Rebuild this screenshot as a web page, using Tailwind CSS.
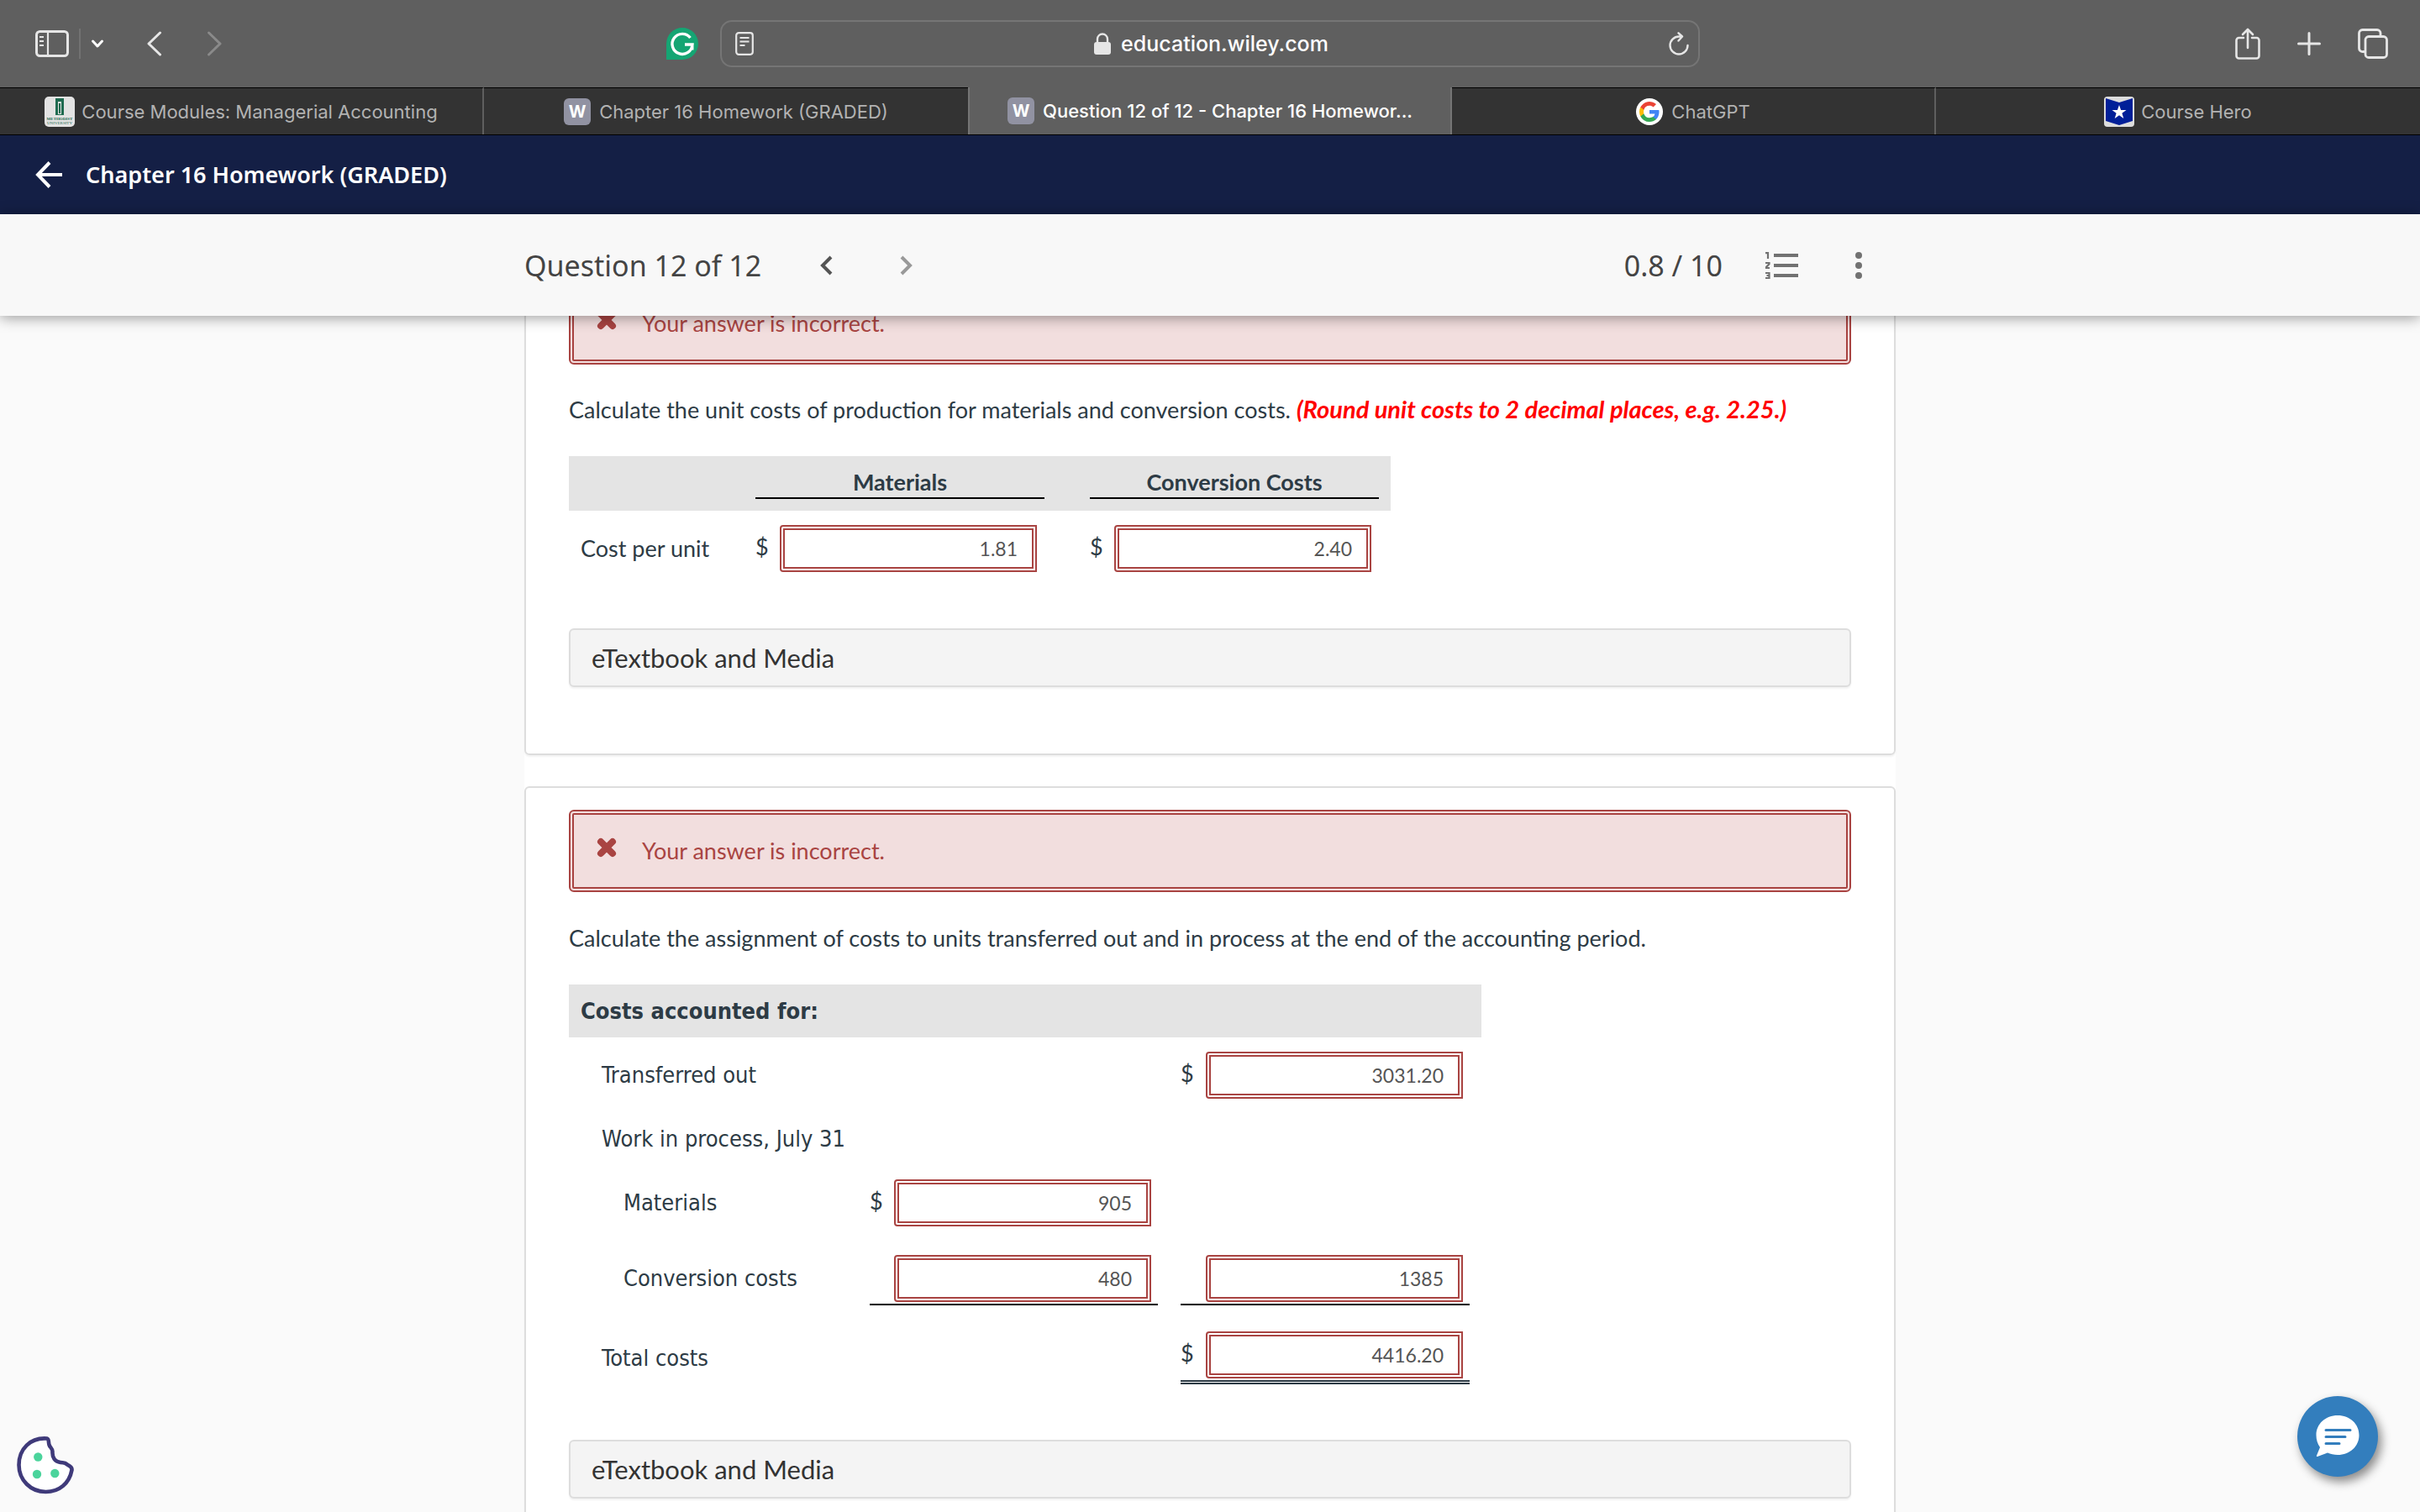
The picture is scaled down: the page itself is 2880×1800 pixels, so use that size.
<!DOCTYPE html>
<html lang="en">
<head>
<meta charset="utf-8">
<title>Question 12 of 12 - Chapter 16 Homework (GRADED)</title>
<script src="https://cdn.jsdelivr.net/npm/@tailwindcss/browser@4"></script>
</head>
<body class="bg-[#fafafa]">
<div class="flex h-screen flex-col overflow-hidden font-['Lato',sans-serif] text-[27px] leading-10 text-[#2d3b45]">

  <!-- Browser toolbar -->
  <div class="grid h-[104px] shrink-0 grid-cols-[1fr_1166px_1fr] items-center bg-[#5f5f5f] font-['Inter',sans-serif] text-[#e6e6e6]">
    <div class="flex items-center pl-[42px] pr-[26px]">
      <button aria-label="Sidebar"><svg class="block h-8 w-10" viewBox="0 0 40 32" fill="none" stroke="currentColor" stroke-width="3"><rect x="1.5" y="1.5" width="37" height="29" rx="4"/><path d="M15 2v28M5 8h5M5 13h5M5 18h5" stroke-width="2.2"/></svg></button>
      <span class="ml-3 h-9 w-0.5 bg-[#727272]"></span>
      <button aria-label="Tab groups" class="ml-3"><svg class="block h-3 w-4" viewBox="0 0 16 12" fill="none" stroke="#fff" stroke-width="3" stroke-linecap="round" stroke-linejoin="round"><path d="M2.500 3l5.500 6 5.500-6"/></svg></button>
      <button aria-label="Back" class="ml-[50px]"><svg class="block h-[30px] w-5" viewBox="0 0 20 30" fill="none" stroke="currentColor" stroke-width="3" stroke-linecap="round" stroke-linejoin="round"><path d="M16.500 2L3 15l13.500 13"/></svg></button>
      <button aria-label="Forward" class="ml-[51px] text-[#8a8a8a]"><svg class="block h-[30px] w-5" viewBox="0 0 20 30" fill="none" stroke="currentColor" stroke-width="3" stroke-linecap="round" stroke-linejoin="round"><path d="M3.500 2L17 15 3.500 28"/></svg></button>
      <button aria-label="Grammarly" class="ml-auto"><svg class="block size-[38px]" viewBox="0 0 38 38"><path d="M19 0a19 19 0 1 1 0 38H0V19A19 19 0 0 1 19 0z" fill="#15a573"/><path d="M28.500 12A12 12 0 1 0 31 20H22M30.800 20.500v6" fill="none" stroke="#fff" stroke-width="3.400"/></svg></button>
    </div>
    <div class="flex h-14 items-center justify-between rounded-[14px] border-2 border-[#757575] pl-4 pr-[11px]">
      <button aria-label="Reader"><svg class="block h-7 w-[22px]" viewBox="0 0 22 28" fill="none" stroke="currentColor" stroke-width="2.200"><rect x="1.200" y="1.200" width="19.600" height="25.600" rx="3"/><path d="M5.500 7h11M5.500 11.500h11M5.500 16h6"/></svg></button>
      <div class="flex items-center gap-3 text-[25px] font-medium text-white">
        <svg class="h-[26px] w-5" viewBox="0 0 20 26" fill="#e6e6e6"><rect x="0" y="11" width="20" height="15" rx="3"/><path d="M4 12V7.500a6 6 0 0 1 12 0V12" fill="none" stroke="#e6e6e6" stroke-width="2.400"/></svg>
        <span>education.wiley.com</span>
      </div>
      <button aria-label="Reload"><svg class="block h-7 w-6" viewBox="0 0 24 28" fill="none" stroke="currentColor" stroke-width="2.400" stroke-linecap="round" stroke-linejoin="round"><path d="M22.500 16A10.500 10.500 0 1 1 12 5.500h4M11.500 1.300L16 5.500l-4.500 5"/></svg></button>
    </div>
    <div class="flex items-center justify-end gap-11 pr-[38px]">
      <button aria-label="Share"><svg class="block h-[38px] w-[30px]" viewBox="0 0 30 38" fill="none" stroke="currentColor" stroke-width="2.600" stroke-linecap="round" stroke-linejoin="round"><path d="M10 12H4.500A3 3 0 0 0 1.500 15v18.500a3 3 0 0 0 3 3h21a3 3 0 0 0 3-3V15a3 3 0 0 0-3-3H20M15 24V2.500M9 8l6-6 6 6"/></svg></button>
      <button aria-label="New tab"><svg class="block size-7" viewBox="0 0 28 28" fill="none" stroke="currentColor" stroke-width="3" stroke-linecap="round"><path d="M14 1.500v25M1.500 14h25"/></svg></button>
      <button aria-label="Tab overview"><svg class="block size-9" viewBox="0 0 36 36" fill="none" stroke="currentColor" stroke-width="2.800"><rect x="9" y="9.500" width="25.500" height="25" rx="4"/><path d="M9 27.500H6A4 4 0 0 1 1.500 23.500V5.500A4 4 0 0 1 5.500 1.500h17.500A4 4 0 0 1 27 5.500v4"/></svg></button>
    </div>
  </div>

  <!-- Tab strip -->
  <nav class="grid h-[57px] shrink-0 grid-cols-5 border-b border-black bg-[#333] font-['Inter',sans-serif] text-[22px] text-[#b2b2b2]">
    <a href="#" class="flex items-center justify-center gap-2 border-r-2 border-t border-r-[#5f5f5f] border-t-black">
      <svg class="size-9" viewBox="0 0 36 36"><rect width="36" height="36" rx="5" fill="#e3e3e3"/><path d="M13 2h10v20H13z" fill="#1f6b50"/><path d="M16 6h4v15h-4z" fill="#e3e3e3"/><path d="M17 8h2v12h-2z" fill="#1f6b50"/><text x="18" y="28" text-anchor="middle" font-family="Liberation Serif" font-weight="700" font-size="5" fill="#1f6b50">METHODIST</text><text x="18" y="33" text-anchor="middle" font-family="Liberation Serif" font-size="5" fill="#1f6b50">UNIVERSITY</text></svg>
      <span>Course Modules: Managerial Accounting</span></a>
    <a href="#" class="flex items-center justify-center gap-2.5 border-t border-black">
      <span class="grid size-8 place-items-center rounded-md bg-[#9192a2] text-xl font-bold text-white">W</span>
      <span>Chapter 16 Homework (GRADED)</span></a>
    <a href="#" class="flex items-center justify-center gap-2.5 border-x-2 border-[#757575] bg-[#5f5f5f] font-medium text-white">
      <span class="grid size-8 place-items-center rounded-md bg-[#9192a2] text-xl font-bold">W</span>
      <span>Question 12 of 12 - Chapter 16 Homewor...</span></a>
    <a href="#" class="flex items-center justify-center gap-2.5 border-r-2 border-t border-r-[#5f5f5f] border-t-black">
      <svg class="size-8" viewBox="0 0 32 32"><circle cx="16" cy="16" r="16" fill="#fff"/><g transform="translate(4 4)"><path fill="#4285F4" d="M23.500 12.300c0-.8-.1-1.600-.2-2.300H12v4.500h6.500a5.500 5.500 0 0 1-2.400 3.600v3h3.900c2.200-2.100 3.500-5.200 3.500-8.800z"/><path fill="#34A853" d="M12 24c3.200 0 6-1.100 8-2.900l-3.900-3c-1.100.7-2.500 1.200-4.100 1.200a7.200 7.200 0 0 1-6.700-5H1.300v3.100A12 12 0 0 0 12 24z"/><path fill="#FBBC05" d="M5.300 14.300a7.200 7.200 0 0 1 0-4.600V6.600H1.300a12 12 0 0 0 0 10.800z"/><path fill="#EA4335" d="M12 4.800c1.800 0 3.300.6 4.600 1.800L20 3.100A12 12 0 0 0 1.300 6.600l4 3.100A7.200 7.200 0 0 1 12 4.800z"/></g></svg>
      <span>ChatGPT</span></a>
    <a href="#" class="flex items-center justify-center gap-2 border-t border-black">
      <svg class="size-9" viewBox="0 0 36 36"><rect width="36" height="36" rx="4" fill="#ddd"/><path d="M2 2l16 5 16-5v27l-16 5-16-5z" fill="#001f98"/><path d="M18 10l2.100 6h6.400l-5.100 3.800 1.900 6.200-5.300-3.700-5.300 3.700 1.900-6.200L9.500 16h6.400z" fill="#fff"/></svg>
      <span>Course Hero</span></a>
  </nav>

  <!-- Assignment bar -->
  <div class="flex h-[94px] shrink-0 items-center gap-7 bg-[#141f45] pl-[42px] font-['Noto_Sans',sans-serif] text-[27px] font-semibold text-white">
    <a href="#" aria-label="Back to course"><svg class="size-8" viewBox="0 0 32 32" fill="none" stroke="#fff" stroke-width="4"><path d="M17 1.500L3 16l14 14.500M3 16h29"/></svg></a>
    <h1>Chapter 16 Homework (GRADED)</h1>
  </div>

  <!-- Question bar -->
  <header class="relative z-10 flex h-[121px] shrink-0 bg-[#f8f8f8] shadow-[0_2px_16px_rgba(0,0,0,0.4)]">
    <div class="mx-auto flex w-full max-w-[1632px] items-center font-['Noto_Sans',sans-serif] text-[34px] text-[#444]">
      <h2>Question 12 of 12</h2>
      <button aria-label="Previous question" class="ml-[67px] text-[#555]"><svg class="block h-6 w-5" viewBox="0 0 20 24" fill="none" stroke="currentColor" stroke-width="4"><path d="M16 2L6 12l10 10"/></svg></button>
      <button aria-label="Next question" disabled class="ml-[76px] text-[#999]"><svg class="block h-6 w-5" viewBox="0 0 20 24" fill="none" stroke="currentColor" stroke-width="4"><path d="M4 2l10 10L4 22"/></svg></button>
      <span class="ml-auto">0.8 / 10</span>
      <button aria-label="Question list" class="ml-[50px]"><svg class="block h-8 w-10" viewBox="0 0 40 32" fill="#727272" stroke="none"><path d="M11 2h29v4H11zM11 14h29v4H11zM11 26h29v4H11z"/><path d="M1 1.200h3V8M1 13h4.500v1.200L2 18v1h4M1 25h4.500v6H1M2.500 28H6" fill="none" stroke="#727272" stroke-width="2.200"/></svg></button>
      <button aria-label="More options" class="ml-[68px] mr-10"><svg class="block h-9 w-2" viewBox="0 0 8 36" fill="#727272"><circle cx="4" cy="6" r="4"/><circle cx="4" cy="18" r="4"/><circle cx="4" cy="30" r="4"/></svg></button>
    </div>
  </header>

  <main class="flex-1 overflow-hidden">
    <div class="mx-auto -mt-[68px] flex max-w-[1632px] flex-col gap-[37px] bg-white">

      <section class="rounded-md border-2 border-[#ddd] px-[51px] pb-[79px] pt-[26px] shadow-[0_2px_2px_rgba(0,0,0,0.05)]">
        <div role="alert" class="flex h-[98px] items-center gap-[30px] rounded-md border-6 border-double border-[#a94442] bg-[#f2dede] pl-[27px] text-[#a94442]">
          <svg class="mb-2 size-6" viewBox="0 0 24 24" stroke="currentColor" stroke-width="8" stroke-linecap="round"><path d="M5 5l14 14M19 5L5 19"/></svg>
          <p>Your answer is incorrect.</p>
        </div>
        <p class="mt-[34px]">Calculate the unit costs of production for materials and conversion costs. <strong class="text-[29px] leading-none font-bold italic text-[#f00]">(Round unit costs to 2 decimal places, e.g. 2.25.)</strong></p>
        <table class="mt-[35px] table-fixed border-collapse">
          <thead>
            <tr class="bg-[#e4e4e4]">
              <td class="w-[222px] p-0"></td>
              <th scope="col" id="h-mat" class="w-[344px] px-0 pb-3.5 pt-[13px]"><div class="border-b-2 border-black leading-9">Materials</div></th>
              <td class="w-[54px] p-0"></td>
              <th scope="col" id="h-conv" class="w-[358px] pb-3.5 pl-0 pr-3.5 pt-[13px]"><div class="border-b-2 border-black leading-9">Conversion Costs</div></th>
            </tr>
          </thead>
          <tbody>
            <tr>
              <th scope="row" id="r-cpu" class="pb-0 pl-3.5 pt-[17px] text-left font-normal">Cost per unit</th>
              <td class="p-0 pt-[17px]"><div class="flex items-center"><span class="w-[29px] pb-1">$</span><input aria-labelledby="r-cpu h-mat" value="1.81" class="h-14 w-[306px] rounded-l border-6 border-double border-[#a94442] bg-white pr-[17px] text-right text-[23px] text-[#555]"></div></td>
              <td></td>
              <td class="p-0 pt-[17px]"><div class="flex items-center"><span class="w-[29px] pb-1">$</span><input aria-labelledby="r-cpu h-conv" value="2.40" class="h-14 w-[306px] rounded-l border-6 border-double border-[#a94442] bg-white pr-[17px] text-right text-[23px] text-[#555]"></div></td>
            </tr>
          </tbody>
        </table>
        <button class="mt-[67px] flex h-[70px] w-full items-center rounded-md border-2 border-[#ddd] bg-[#f4f4f4] pl-[25px] text-[31px] text-[#333] shadow-[0_2px_2px_rgba(0,0,0,0.05)]">eTextbook and Media</button>
      </section>

      <section class="rounded-md border-2 border-[#ddd] px-[51px] pb-[79px] pt-[26px] shadow-[0_2px_2px_rgba(0,0,0,0.05)]">
        <div role="alert" class="flex h-[98px] items-center gap-[30px] rounded-md border-6 border-double border-[#a94442] bg-[#f2dede] pl-[27px] text-[#a94442]">
          <svg class="mb-2 size-6" viewBox="0 0 24 24" stroke="currentColor" stroke-width="8" stroke-linecap="round"><path d="M5 5l14 14M19 5L5 19"/></svg>
          <p>Your answer is incorrect.</p>
        </div>
        <p class="mt-[35px]">Calculate the assignment of costs to units transferred out and in process at the end of the accounting period.</p>
        <table class="mt-[35px] table-fixed border-collapse text-left font-['DejaVu_Sans_Condensed','DejaVu_Sans',sans-serif]">
          <thead>
            <tr class="h-[63px] bg-[#e4e4e4]">
              <th scope="col" class="w-[358px] p-0 pl-3.5">Costs accounted for:</th>
              <td class="w-[370px] p-0"></td>
              <td class="w-[358px] p-0"></td>
            </tr>
          </thead>
          <tbody>
            <tr>
              <th scope="row" id="r-out" class="p-0 pb-2.5 pl-[39px] pt-[17px] font-normal">Transferred out</th>
              <td></td>
              <td class="p-0 pb-2.5 pt-[17px]"><div class="flex items-center font-['Lato',sans-serif]"><span class="w-[30px] pb-1">$</span><input aria-labelledby="r-out" value="3031.20" class="h-14 w-[306px] rounded-l border-6 border-double border-[#a94442] bg-white pr-[17px] text-right text-[23px] text-[#555]"></div></td>
            </tr>
            <tr class="h-[76px]">
              <th scope="row" colspan="3" class="p-0 pl-[39px] font-normal">Work in process, July 31</th>
            </tr>
            <tr>
              <th scope="row" id="r-mat" class="p-0 py-2.5 pl-[65px] font-normal">Materials</th>
              <td class="p-0 py-2.5"><div class="flex items-center font-['Lato',sans-serif]"><span class="w-[29px] pb-1">$</span><input aria-labelledby="r-mat" value="905" class="h-14 w-[306px] rounded-l border-6 border-double border-[#a94442] bg-white pr-[17px] text-right text-[23px] text-[#555]"></div></td>
              <td></td>
            </tr>
            <tr>
              <th scope="row" id="r-conv" class="p-0 pb-1 pl-[65px] pt-6 font-normal">Conversion costs</th>
              <td class="p-0 pr-[27px] pt-6 font-['Lato',sans-serif]"><div class="border-b-2 border-black pb-0.5 pl-[29px]"><input aria-labelledby="r-conv" value="480" class="block h-14 w-[306px] rounded-l border-6 border-double border-[#a94442] bg-white pr-[17px] text-right text-[23px] text-[#555]"></div></td>
              <td class="p-0 pr-3.5 pt-6 font-['Lato',sans-serif]"><div class="border-b-2 border-black pb-0.5 pl-[30px]"><input aria-label="Total work in process" value="1385" class="block h-14 w-[306px] rounded-l border-6 border-double border-[#a94442] bg-white pr-[17px] text-right text-[23px] text-[#555]"></div></td>
            </tr>
            <tr>
              <th scope="row" id="r-total" class="p-0 pl-[39px] pt-[31px] font-normal">Total costs</th>
              <td></td>
              <td class="p-0 pr-3.5 pt-[31px]"><div class="flex items-center border-b-5 border-double border-[#2d3b45] pb-0.5 font-['Lato',sans-serif]"><span class="w-[30px] pb-1">$</span><input aria-labelledby="r-total" value="4416.20" class="h-14 w-[306px] rounded-l border-6 border-double border-[#a94442] bg-white pr-[17px] text-right text-[23px] text-[#555]"></div></td>
            </tr>
          </tbody>
        </table>
        <button class="mt-[66px] flex h-[70px] w-full items-center rounded-md border-2 border-[#ddd] bg-[#f4f4f4] pl-[25px] text-[31px] text-[#333] shadow-[0_2px_2px_rgba(0,0,0,0.05)]">eTextbook and Media</button>
      </section>
    </div>
  </main>
</div>

<!-- Floating controls -->
<button aria-label="Cookie settings" class="fixed bottom-5 left-5"><svg class="block size-[70px]" viewBox="0 0 70 70"><path d="M36 2.500C16 1 2.500 15 2.500 34c0 18 14 32 32 32 16 0 28-10 31-26 .5-4-3-4.500-5.500-6.500-3-3-4-2-8-2.500-7-1-10-6-9.500-13 0-4-3-4.500-4-8-1-3 0-7-2.500-7.500z" fill="#fff" stroke="#3f3a7a" stroke-width="4.600" stroke-linejoin="round"/><g fill="#4bd49c"><circle cx="25.300" cy="24.500" r="5.200"/><circle cx="24" cy="45" r="5.200"/><circle cx="45.300" cy="44" r="5.200"/></g></svg></button>
<button aria-label="Chat" class="fixed bottom-[42px] right-[50px] grid size-24 place-items-center rounded-full bg-[#337ebd] shadow-[4px_6px_12px_rgba(0,0,0,0.45)]"><svg class="h-[50px] w-[52px]" viewBox="0 0 52 50"><path d="M26 0c14.500 0 25.500 10 25.500 23.500S40.500 47 26 47c-4.500 0-8.500-.8-12-2.400L2 49c-1 .2-1.300-.4-1-1.200L5 38C2 34 .5 29 .5 23.500.5 10 11.500 0 26 0z" fill="#fff"/><path d="M12 17.500h29M12 25.500h23M12 33.500h16" stroke="#337ebd" stroke-width="3" stroke-linecap="round"/></svg></button>
</body>
</html>
